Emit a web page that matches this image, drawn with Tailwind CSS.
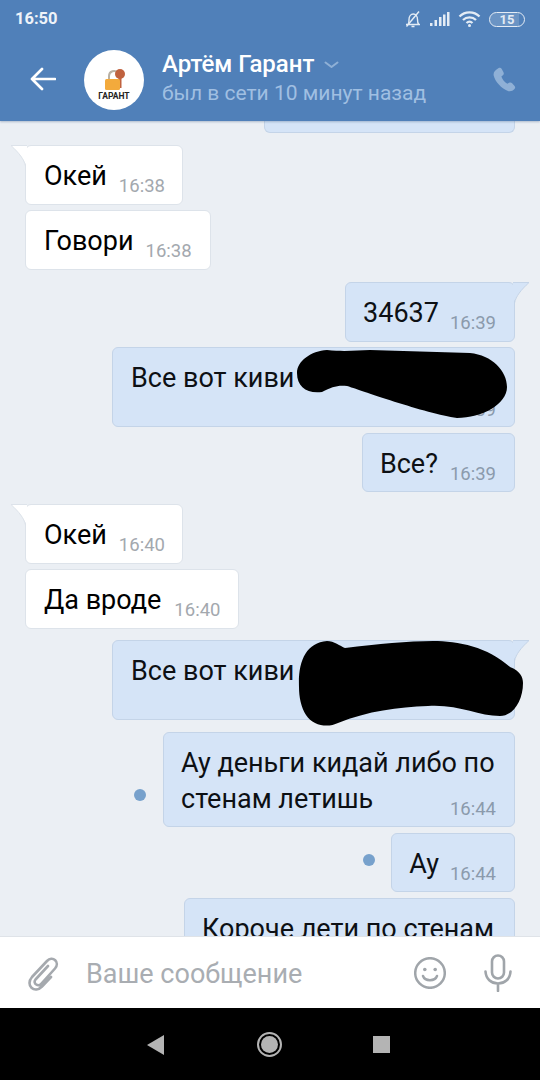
<!DOCTYPE html>
<html lang="ru">
<head>
    <meta charset="UTF-8">
    <meta name="viewport" content="width=device-width, initial-scale=1.0">
    <title>Артём Гарант</title>
    <script src="https://cdn.jsdelivr.net/npm/@tailwindcss/browser@4"></script>
</head>
<body class="bg-[#ebeff4] font-['Roboto',sans-serif]">
    <div class="w-[540px] h-[1080px] flex flex-col overflow-hidden relative">
        <!-- Header -->
        <header class="relative z-10 h-[121px] shrink-0 bg-[#5080b9] shadow-[0_1px_2px_rgba(60,90,130,0.35)]">
            <div class="h-[38px] pl-[15px] pr-[15px] flex items-center justify-between text-white">
                <span class="text-[16.5px] font-bold text-[#eef3f9]">16:50</span>
                <div class="flex items-center gap-[7px]">
                    <svg width="18" height="18" viewBox="0 0 18 18" fill="none" stroke="#e4ecf5" stroke-width="1.4"><path d="M2 14.500h14M4 14.500c1.200-1.500 1-3 1-5 0-3 1.800-5.500 4.300-5.500S13.500 6.500 13.500 9.500c0 2 0 3.500 1.200 5M7.500 16.500h3"/><path d="M2.500 16.500 15 1.500"/></svg>
                    <svg width="22" height="16" viewBox="0 0 22 16" fill="#e4ecf5"><rect x="1" y="12" width="2.500" height="3"/><rect x="5.500" y="9" width="2.500" height="6"/><rect x="10" y="6" width="2.500" height="9"/><rect x="14" y="3.500" width="2.500" height="11.500"/><rect x="18" y="1" width="2.500" height="14"/></svg>
                    <svg width="24" height="18" viewBox="0 0 24 18" fill="none" stroke="#e4ecf5" stroke-width="2.300"><path d="M1.500 6.500C7 1 16 1 21.500 6.500"/><path d="M5 10c3.500-3.400 9.500-3.400 13 0"/><path d="M8.500 13c1.700-1.500 4.300-1.500 6 0"/><circle cx="11.500" cy="15.500" r="1.500" fill="#e4ecf5" stroke="none"/></svg>
                    <div class="w-[36px] h-[15px] rounded-full border border-[#e4ecf5] flex items-center justify-center text-[13px] font-bold leading-none text-[#e4ecf5] bg-[linear-gradient(90deg,#6b94c4_85%,#5080b9_85%)]">15</div>
                </div>
            </div>
            <div class="h-[83px] flex items-center pl-[30px]">
                <svg class="mb-[1px]" width="26" height="24" viewBox="0 0 26 24" fill="none" stroke="#fff" stroke-width="2.700" stroke-linecap="round" stroke-linejoin="round"><path d="M25 12H2M12 2 2 12l10 10"/></svg>
                <div class="ml-[28px] w-[60px] h-[60px] rounded-full bg-white relative shrink-0">
                    <svg class="absolute left-[20px] top-[18px]" width="24" height="25" viewBox="0 0 24 25"><path d="M5 11V8a5 5 0 0 1 9-3" fill="none" stroke="#b9b1a4" stroke-width="2"/><rect x="14.500" y="8" width="3" height="12" fill="#c0623f"/><circle cx="16" cy="6" r="5" fill="#c0623f"/><rect x="1" y="11" width="15" height="11" rx="1.500" fill="#f3aa3c"/></svg>
                    <span class="absolute left-0 right-0 top-[41px] text-center text-[8.500px] leading-[10px] font-bold text-[#222]">ГАРАНТ</span>
                </div>
                <div class="ml-[18px] flex-1">
                    <div class="flex items-center text-[24px] leading-[26px] font-medium text-white mt-[-2px]">Артём Гарант
                        <svg class="ml-[10px] mt-[2px]" width="15" height="8" viewBox="0 0 15 8" fill="none" stroke="#8fb0d6" stroke-width="2" stroke-linecap="round" stroke-linejoin="round"><path d="M1.500 1.500 7.500 6l6-4.500"/></svg>
                    </div>
                    <div class="mt-[3px] text-[21px] leading-[26px] text-[#a0bfe2]">был в сети 10 минут назад</div>
                </div>
                <svg class="mr-[21px]" width="28" height="28" viewBox="0 0 24 24" fill="#8fb0d6"><path d="M6.600 1.800c1-.6 2-.3 2.600.7l1.500 2.800c.5 1 .3 1.900-.5 2.600l-1.300 1.100c.8 2.400 2.400 4.500 5.100 6.300l1.500-.9c.9-.5 1.900-.4 2.600.4l2.100 2.300c.7.800.7 1.900-.1 2.700-1.400 1.500-3.300 2.300-5.100 1.800C8.800 19.200 3.500 13.300 2.300 8.100 1.800 5.700 3.400 3.500 6.600 1.800Z"/></svg>
            </div>
        </header>

        <!-- Messages -->
        <main class="flex-1 min-h-0 overflow-hidden px-[25px] flex flex-col">
            <div class="self-end w-[251px] h-[12px] shrink-0 bg-[#d5e4f7] border border-t-0 border-[#c4d4e8] rounded-b-[6px]"></div>

            <div class="mt-[12px] self-start relative h-[60px] shrink-0 bg-white rounded-[6px] border border-[#dde3ea] pl-[18px] pr-[17px] flex">
                <svg class="absolute left-[-16px] top-[-1px]" width="18" height="24" viewBox="0 0 18 24"><path d="M1 .500H17V23C15 15 9 8 1 .500Z" fill="#fff"/><path d="M1 .500H17M1 .500C9 8 14 14 15.500 21" fill="none" stroke="#dde3ea"/></svg>
                <span class="relative text-[27px] leading-[61px] text-black">Окей</span>
                <span class="ml-[12px] text-[18.5px] self-end mb-[7px] leading-[22px] text-[#a3a8ae]">16:38</span>
            </div>
            <div class="mt-[5px] self-start h-[60px] shrink-0 bg-white rounded-[6px] border border-[#dde3ea] pl-[18px] pr-[18px] flex">
                <span class="text-[27px] leading-[61px] text-black">Говори</span>
                <span class="ml-[12px] text-[18.5px] self-end mb-[7px] leading-[22px] text-[#a3a8ae]">16:38</span>
            </div>

            <div class="mt-[12px] self-end relative h-[60px] shrink-0 bg-[#d5e4f7] rounded-[6px] border border-[#c4d4e8] pl-[17px] pr-[18px] flex">
                <svg class="absolute right-[-16px] top-[-1px]" width="18" height="24" viewBox="0 0 18 24"><path d="M17 .500H1V23C3 15 9 8 17 .500Z" fill="#d5e4f7"/><path d="M1 .500H17C9 8 4 14 2.500 21" fill="none" stroke="#c4d4e8"/></svg>
                <span class="relative text-[27px] leading-[61px] text-[#0d1014]">34637</span>
                <span class="ml-[11px] text-[18.5px] self-end mb-[7px] leading-[22px] text-[#8b9aac]">16:39</span>
            </div>
            <div class="mt-[5px] self-end relative w-[403px] h-[80px] shrink-0 bg-[#d5e4f7] rounded-[6px] border border-[#c4d4e8] pl-[18px]">
                <span class="text-[27px] leading-[61px] text-[#0d1014]">Все вот киви</span>
                <span class="absolute right-[18px] bottom-[5px] text-[18.5px] leading-[22px] text-[#8b9aac]">16:39</span>
                <svg class="absolute left-[184px] top-[1px]" width="212" height="72" viewBox="0 0 212 72"><path d="M0 24C0 12 14 2 30 1 50 3 60 1 73 1L173 4C195 6 210 22 210 38 210 55 185 69 160 69 130 65 60 40 50 37 40 36 35 38 25 43 10 45 0 38 0 24Z" fill="#000"/></svg>
            </div>
            <div class="mt-[6px] self-end h-[59px] shrink-0 bg-[#d5e4f7] rounded-[6px] border border-[#c4d4e8] pl-[17px] pr-[18px] flex">
                <span class="text-[27px] leading-[61px] text-[#0d1014]">Все?</span>
                <span class="ml-[12px] text-[18.5px] self-end mb-[6px] leading-[22px] text-[#8b9aac]">16:39</span>
            </div>

            <div class="mt-[12px] self-start relative h-[60px] shrink-0 bg-white rounded-[6px] border border-[#dde3ea] pl-[18px] pr-[17px] flex">
                <svg class="absolute left-[-16px] top-[-1px]" width="18" height="24" viewBox="0 0 18 24"><path d="M1 .500H17V23C15 15 9 8 1 .500Z" fill="#fff"/><path d="M1 .500H17M1 .500C9 8 14 14 15.500 21" fill="none" stroke="#dde3ea"/></svg>
                <span class="relative text-[27px] leading-[61px] text-black">Окей</span>
                <span class="ml-[12px] text-[18.5px] self-end mb-[7px] leading-[22px] text-[#a3a8ae]">16:40</span>
            </div>
            <div class="mt-[5px] self-start h-[60px] shrink-0 bg-white rounded-[6px] border border-[#dde3ea] pl-[18px] pr-[18px] flex">
                <span class="text-[27px] leading-[61px] text-black">Да вроде</span>
                <span class="ml-[13px] text-[18.5px] self-end mb-[7px] leading-[22px] text-[#a3a8ae]">16:40</span>
            </div>

            <div class="mt-[11px] self-end relative w-[403px] h-[80px] shrink-0 bg-[#d5e4f7] rounded-[6px] border border-[#c4d4e8] pl-[18px]">
                <svg class="absolute right-[-16px] top-[-1px]" width="18" height="24" viewBox="0 0 18 24"><path d="M17 .500H1V23C3 15 9 8 17 .500Z" fill="#d5e4f7"/><path d="M1 .500H17C9 8 4 14 2.500 21" fill="none" stroke="#c4d4e8"/></svg>
                <span class="text-[27px] leading-[61px] text-[#0d1014]">Все вот киви</span>
                <svg class="absolute left-[185px] top-0" width="226" height="88" viewBox="0 0 226 88"><path d="M1 46C0 20 8 2 29 0 36 0 42 5 47 7 80 3 110 0 135 0 160 0 190 6 212 26 222 30 225 36 225 42 225 60 215 75 202 75 180 75 160 63 130 65 100 66 70 70 40 82 30 87 15 85 8 74 3 66 1 56 1 46Z" fill="#000"/></svg>
            </div>
            <div class="mt-[12px] self-end relative w-[352px] h-[95px] shrink-0 bg-[#d5e4f7] rounded-[6px] border border-[#c4d4e8] pl-[17px]">
                <span class="absolute left-[-30px] top-[56px] w-[12px] h-[12px] rounded-full bg-[#77a1cc]"></span>
                <p class="pt-[12px] text-[27px] leading-[36px] text-[#0d1014]">Ау деньги кидай либо по<br>стенам летишь</p>
                <span class="absolute right-[18px] bottom-[6px] text-[18.5px] leading-[22px] text-[#8b9aac]">16:44</span>
            </div>
            <div class="mt-[6px] self-end relative h-[59px] shrink-0 bg-[#d5e4f7] rounded-[6px] border border-[#c4d4e8] pl-[17px] pr-[18px] flex">
                <span class="absolute left-[-29px] top-[20px] w-[12px] h-[12px] rounded-full bg-[#77a1cc]"></span>
                <span class="text-[27px] leading-[61px] text-[#0d1014]">Ау</span>
                <span class="ml-[11px] text-[18.5px] self-end mb-[6px] leading-[22px] text-[#8b9aac]">16:44</span>
            </div>
            <div class="mt-[6px] self-end w-[331px] h-[60px] shrink-0 bg-[#d5e4f7] rounded-[6px] border border-[#c4d4e8] pl-[17px]">
                <span class="text-[27px] leading-[61px] text-[#0d1014]">Короче лети по стенам</span>
            </div>
        </main>

        <!-- Input bar -->
        <footer class="relative z-10 h-[72px] shrink-0 bg-white border-t border-[#dfe3e8] flex items-center pl-[27px]">
            <svg width="32" height="36" viewBox="0 0 32 36" fill="none" stroke="#a5a9ae" stroke-width="2.600" stroke-linecap="round" stroke-linejoin="round"><path d="M21 11 8.500 24.500c-1.700 2-.6 4.200.7 5 1.500 1 3.500.9 5-.7L28 13.500c2.500-3 2.300-6.300.2-8.300-2.300-2.200-5.600-2-8.200.8L5 22c-3.500 4-3 8.500-.5 10.800 2.800 2.500 7 2.300 10.500-1.300l9-9.500"/></svg>
            <span class="ml-[27px] mt-[3px] flex-1 text-[27px] text-[#a9adb2]">Ваше сообщение</span>
            <svg width="32" height="32" viewBox="0 0 32 32" fill="none" stroke="#a0a5aa" stroke-width="2.500" stroke-linecap="round"><circle cx="16" cy="16" r="14.800"/><path d="M9 19c2 5.500 12 5.500 14 0"/><circle cx="10.800" cy="12.500" r="1.800" fill="#a0a5aa" stroke="none"/><circle cx="21.200" cy="12.500" r="1.800" fill="#a0a5aa" stroke="none"/></svg>
            <svg class="ml-[38px] mr-[28px]" width="28" height="38" viewBox="0 0 28 38" fill="none" stroke="#a0a5aa" stroke-width="2.600" stroke-linecap="round"><rect x="8" y="1.500" width="12" height="23" rx="6"/><path d="M1.500 17.500c.5 7.500 5.500 12 12.500 12s12-4.500 12.500-12M14 29.500V37"/></svg>
        </footer>

        <!-- Android nav -->
        <nav class="h-[72px] shrink-0 bg-black relative flex items-center">
            <svg class="absolute left-[147px] top-[27px]" width="18" height="20" viewBox="0 0 18 20"><path d="M17 0v20L0 10Z" fill="#b4b4b4"/></svg>
            <div class="absolute left-[257px] top-[24px] w-[25px] h-[25px] rounded-full border-2 border-[#b4b4b4] p-[2px]"><div class="w-full h-full rounded-full bg-[#b4b4b4]"></div></div>
            <div class="absolute left-[373px] top-[28px] w-[17px] h-[17px] bg-[#b4b4b4]"></div>
        </nav>
    </div>
</body>
</html>
